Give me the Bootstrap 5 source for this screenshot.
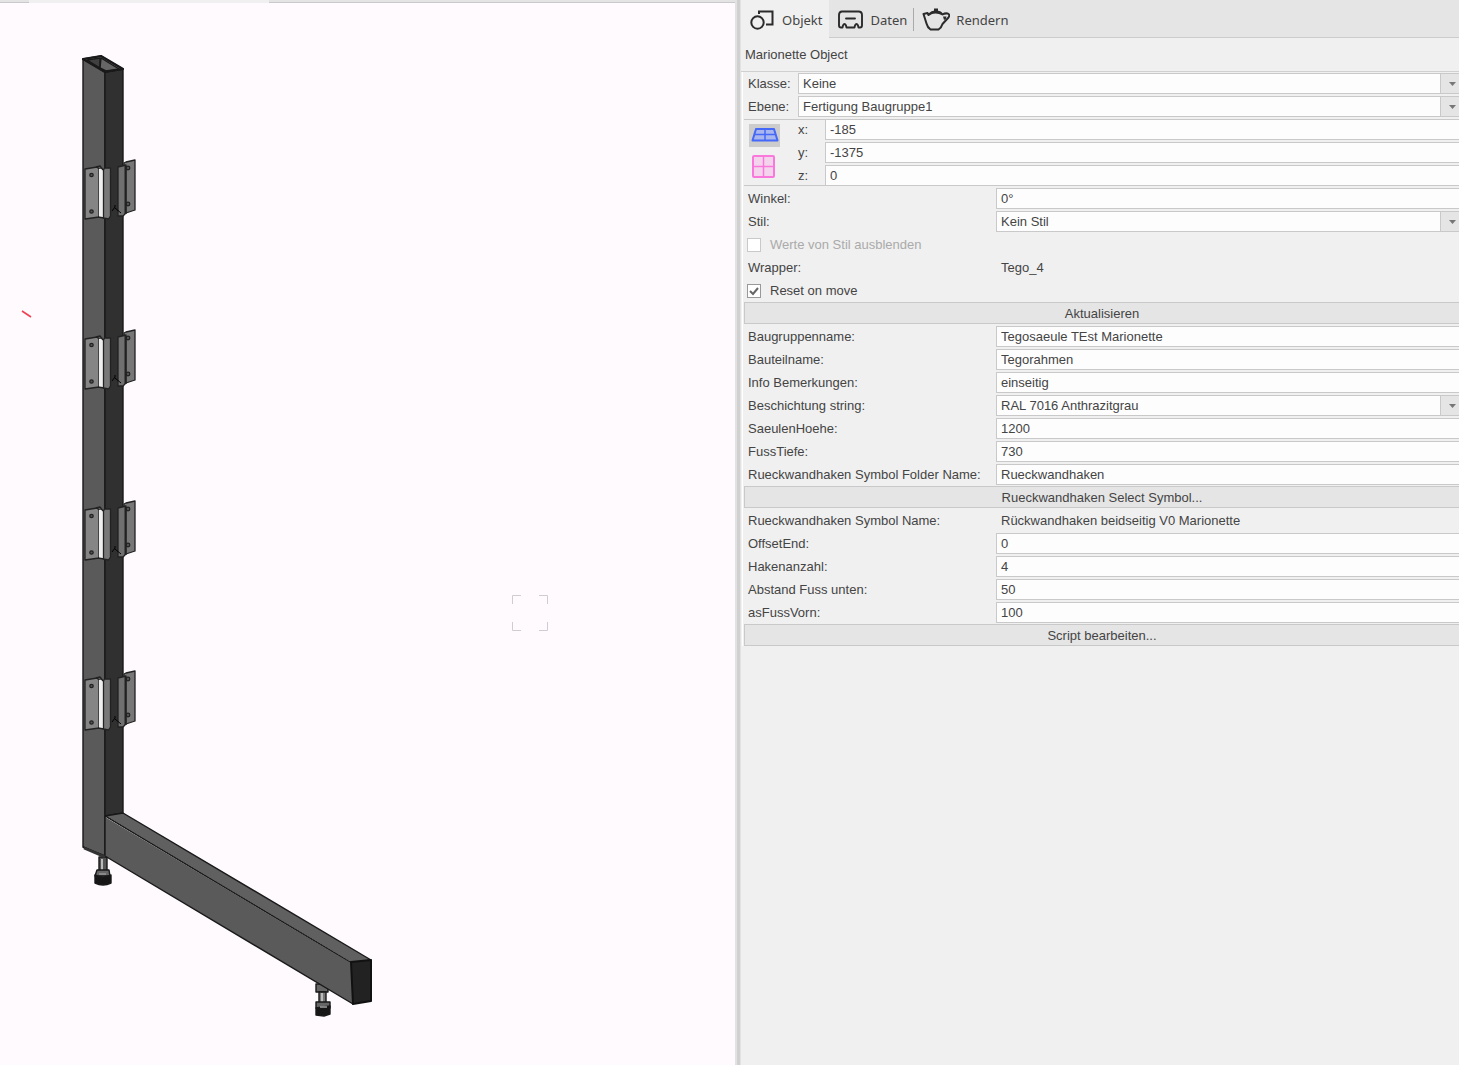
<!DOCTYPE html>
<html lang="de">
<head>
<meta charset="utf-8">
<meta name="viewport" content="width=device-width, initial-scale=1">
<title>Marionette Object</title>
<link rel="stylesheet" href="https://cdn.jsdelivr.net/npm/bootstrap@5.3.0/dist/css/bootstrap.min.css">
<style>
body{font:13px/20px "Liberation Sans",Arial,sans-serif;color:#444;background:#f0f0f0}
.view{background:#fefafe}
.strip{height:3px;background:#e4e4e4;border-bottom:1px solid #c9c9c9}
.strip span{width:240px;height:3px;margin-left:29px;background:#f0f0f0}
.split{width:6px;background:linear-gradient(to right,#e2e2e2 2px,#d0d0d0 2px,#d0d0d0 5px,#e2e2e2 5px)}
.dock{width:718px}
.tabs{height:38px;background:#e5e5e5;font-family:"Noto Sans","Open Sans",sans-serif;box-shadow:inset 0 -1px #ccc}
.tabs .nav-link{height:38px;padding:2px 7px 0 9px;gap:8px;color:#444;border:0}
.tabs .nav-link.active{background:#f0f0f0}
.tabs .nav-link+.nav-link,.tabs .rule+.nav-link{padding:2px 6px 0 8px;gap:6px}
.rule{width:1px;height:23px;background:#aaa}
.heading{height:34px;padding:7px 4px 0;font-size:13px;line-height:20px;border-bottom:1px solid #d0d0d0;margin:0;font-weight:400}
.props{border-left:1px solid #fff;margin-left:1px;padding-left:1px}
.line{height:23px;padding-left:4px}
.cap{width:248px;white-space:nowrap}
.cap-s{width:50px}
.line .form-control,.line .form-select{height:21px;min-height:0;padding:0 4px;font-size:13px;line-height:19px;color:#444;border:1px solid #c9c9c9;border-right:0;border-radius:0;background-color:#fdfdfd;flex:1;width:0}
.line .form-select{background-image:url("data:image/svg+xml,%3Csvg xmlns='http://www.w3.org/2000/svg' width='19' height='20'%3E%3Cpath fill='%23e5e5e5' d='M0 0h19v20H0z'/%3E%3Cpath fill='%23c9c9c9' d='M0 0h1v20H0z'/%3E%3Cpath fill='%23777' d='M9 8h7l-3.5 4z'/%3E%3C/svg%3E");background-position:right top;background-size:19px 20px}
.act{display:block;width:100%;height:22px;margin-bottom:1px;padding:1px 0 0;font-size:13px;line-height:19px;color:#444;background:#e5e5e5;border:1px solid #c9c9c9;border-right:0;border-radius:0}
.xyz{border-top:1px solid #c9c9c9;border-bottom:1px solid #c9c9c9;margin:1px 0;height:67px}
.xyz .line{padding-left:0}
.xyz .form-control{margin-top:-1px}
.axis{width:27px}
.modes{width:54px;padding:4px 0 0 5px}
.modes button{width:31px;height:23px;padding:0;border:0;border-radius:0;background:transparent;display:flex}
.modes button.active{background:#ccc;margin-bottom:8px}
.line .form-check-input{width:14px;height:14px;margin:1px 9px 0 -1px;border:1px solid #999;border-radius:0;background-color:#fff}
.line .form-check-input:checked{background-size:14px 14px;background-image:url("data:image/svg+xml,%3Csvg xmlns='http://www.w3.org/2000/svg' viewBox='0 0 14 14'%3E%3Cpath fill='none' stroke='%23666' stroke-width='2' d='M3 7l3 3 5-6'/%3E%3C/svg%3E")}
.line .form-check-input:disabled{opacity:1;border-color:#c9c9c9}
.line .form-check-input:disabled~label{opacity:1;color:#aaa}
.fixed-value{padding-left:5px}
</style>
<script src="https://cdn.jsdelivr.net/npm/bootstrap@5.3.0/dist/js/bootstrap.bundle.min.js"></script>
</head>
<body>
<div class="d-flex vh-100 overflow-hidden">
<main class="view flex-grow-1 d-flex flex-column overflow-hidden">
<div class="strip d-flex flex-shrink-0"><span></span></div>
<svg class="w-100 flex-grow-1" viewBox="0 3 735 1062" preserveAspectRatio="xMinYMin meet" role="img" aria-label="Tegorahmen 3D">
<defs>
<g id="hook" stroke="#222" stroke-width="1.3" stroke-linejoin="round">
<path fill="#777" d="M124 163l2-1 9-2v50l-9 3h-2z"/><circle cx="128" cy="168" r="1.8" fill="#555"/><circle cx="128" cy="204" r="1.8" fill="#555"/>
<path fill="#707070" d="M118 167l8-2v48l-3 3h-5z"/><path d="M125.500 166v48" stroke-width="2"/>
<path d="M112 211l3-4v-2m0 3l6 5" fill="none" stroke="#000" stroke-width="1"/>
<path fill="#858585" d="M85 169l12-2 2 2v48l-14 2z"/><circle cx="91.500" cy="175" r="1.700" fill="#555"/><circle cx="91.500" cy="211.500" r="1.700" fill="#555"/>
<path fill="#eee" stroke="none" d="M99 169h4v48h-4z"/><path fill="none" d="M96 167l4-1 3 4M98 217l6 1"/>
<path fill="#777" d="M103.500 170l1-2h6v48l-2 3-5-1z"/>
</g>
</defs>
<g stroke="#191919" stroke-width="1.400" stroke-linejoin="round">
<path fill="#555" d="M99 857h8v14h-8z"/><path stroke="#bbb" stroke-width="2" d="M102 859v11"/>
<path fill="#666" d="M97 870h12l1 6H95z"/><path fill="#161616" d="M95 875q8 4 16 0v8q-8 4-16 0z"/><path stroke="#999" d="M99 874h7"/>
<path fill="#666" d="M316 984h12v8h-12z"/><path fill="#777" d="M319 992h7v12h-7z"/><path stroke="#bbb" stroke-width="2" d="M322 993v9"/>
<path fill="#666" d="M316 1002h14v6h-14z"/><path fill="#161616" d="M316 1008l14-2v8l-6 2-8-1z"/><path stroke="#aaa" d="M320 1007h7"/>
<path fill="#5a5a5a" d="M83 59l22 13v785l-22-10z"/>
<path fill="#303030" d="M105 72l18-3v744l-18 3z"/>
<path fill="#777" d="M83 59l18-3 22 13-18 3z"/><path fill="#404040" d="M87 60l13-2v10z"/><path fill="#666" d="M101 58l18 11-13 2-6-3z"/>
<path fill="none" stroke-width="2.200" d="M83 59l18-3 22 13-18 3z"/>
<path fill="#606060" d="M105 816l18-3 248 147-20 3z"/>
<path fill="#5a5a5a" stroke="none" d="M105 817l246 146 2 41-248-148z"/>
<path fill="none" stroke-width="1" stroke-dasharray="2 1" d="M107 817l245 146"/>
<path fill="none" d="M83 847l22 9 248 148M105 816v41"/>
<path fill="none" stroke-width="2.500" stroke="#333" d="M84 848l21 9"/>
<path fill="#222" stroke="#111" stroke-width="2" d="M351 962l20-2v41l-18 3z"/>
</g>
<use href="#hook"/><use href="#hook" y="170"/><use href="#hook" y="341"/><use href="#hook" y="511"/>
<path stroke="#f04050" stroke-width="1.600" d="M22 311l9 6"/>
<path fill="none" stroke="#d0ccd2" d="M512.500 604v-8.500h8.500M539 595.500h8.500v8.500M547.500 622v8.500h-8.500M521 630.500h-8.500v-8.500"/>
</svg>
</main>
<div class="split flex-shrink-0"></div>
<aside class="dock flex-shrink-0">
<nav class="tabs nav align-items-center flex-nowrap">
<a href="#" class="nav-link active d-flex align-items-center"><svg width="24" height="24" viewBox="750 8 24 24" fill="none" stroke="#2b2b2b" stroke-width="2"><circle cx="757.500" cy="22.500" r="6.200"/><path d="M759 14v-2.500h13.500v13H766"/></svg>Objekt</a>
<a href="#" class="nav-link d-flex align-items-center"><svg width="27" height="24" viewBox="839 8 27 24" fill="none" stroke="#2b2b2b" stroke-width="1.900" stroke-linejoin="round" stroke-linecap="round"><path d="M844 11.500h16.500q3.500 0 3.500 3.500v10.500q0 2-2 2h-1.500l-.5-2q-1.500-3-3 0l-.5 2h-8l-.5-2q-1.500-3-3 0l-.5 2H843q-2 0-2-2V15q0-3.500 3-3.500zM848 18.500h9"/></svg>Daten</a>
<span class="rule"></span>
<a href="#" class="nav-link d-flex align-items-center"><svg width="28" height="24" viewBox="924 8 28 24" fill="none" stroke="#2b2b2b" stroke-width="2" stroke-linejoin="round"><path d="M925.500 14l4-1 1 2q3-2.500 7-2.500t7 2q2.500-1.500 5-1 3 1 1 4l-6 6.500q-1 3.500-4 5.500h-8q-3-2-4-6zM931 14.500q2.500-3 7-3t6 2.500"/><path fill="#2b2b2b" stroke="none" d="M936 8.500h4v3h-4zM945 16.500h3.500q0 2.500-2.500 3.500z"/></svg>Rendern</a>
</nav>
<h1 class="heading">Marionette Object</h1>
<form class="props">
<div class="line d-flex align-items-center"><label class="cap-s" for="kl">Klasse:</label><select id="kl" class="form-select"><option>Keine</option></select></div>
<div class="line d-flex align-items-center"><label class="cap-s" for="eb">Ebene:</label><select id="eb" class="form-select"><option>Fertigung Baugruppe1</option></select></div>
<div class="xyz d-flex">
<div class="modes">
<button type="button" class="active" aria-label="Arbeitsebene"><svg width="31" height="23" viewBox="0 0 31 23" fill="#a9b7ee" stroke="#4468f8" stroke-width="2" stroke-linejoin="round"><path d="M7 5h18l3.500 11.500H3.500z"/><path stroke-width="1.500" d="M5 10.500h22M16 5v11.500"/></svg></button>
<button type="button" aria-label="Konstruktionsebene"><svg width="31" height="23" viewBox="0 0 31 23" fill="#f3d4ec" stroke="#fa78dc" stroke-width="2"><rect x="4" y="1" width="21" height="21" rx="1"/><path stroke-width="1.500" d="M4 11.500h21M14.500 1v21"/></svg></button>
</div>
<div class="flex-grow-1">
<div class="line d-flex align-items-start"><label class="axis" for="px">x:</label><input id="px" class="form-control" value="-185"></div>
<div class="line d-flex align-items-start"><label class="axis" for="py">y:</label><input id="py" class="form-control" value="-1375"></div>
<div class="line d-flex align-items-start"><label class="axis" for="pz">z:</label><input id="pz" class="form-control" value="0"></div>
</div></div>
<div class="line d-flex align-items-center"><label class="cap" for="wi">Winkel:</label><input id="wi" class="form-control" value="0°"></div>
<div class="line d-flex align-items-center"><label class="cap" for="st">Stil:</label><select id="st" class="form-select"><option>Kein Stil</option></select></div>
<div class="line d-flex align-items-center"><input id="ws" type="checkbox" class="form-check-input" disabled><label for="ws">Werte von Stil ausblenden</label></div>
<div class="line d-flex align-items-center"><span class="cap">Wrapper:</span><span class="fixed-value">Tego_4</span></div>
<div class="line d-flex align-items-center"><input id="rm" type="checkbox" class="form-check-input" checked><label for="rm">Reset on move</label></div>
<button type="button" class="act">Aktualisieren</button>
<div class="line d-flex align-items-center"><label class="cap" for="bg">Baugruppenname:</label><input id="bg" class="form-control" value="Tegosaeule TEst Marionette"></div>
<div class="line d-flex align-items-center"><label class="cap" for="bt">Bauteilname:</label><input id="bt" class="form-control" value="Tegorahmen"></div>
<div class="line d-flex align-items-center"><label class="cap" for="ib">Info Bemerkungen:</label><input id="ib" class="form-control" value="einseitig"></div>
<div class="line d-flex align-items-center"><label class="cap" for="bs">Beschichtung string:</label><select id="bs" class="form-select"><option>RAL 7016 Anthrazitgrau</option></select></div>
<div class="line d-flex align-items-center"><label class="cap" for="sh">SaeulenHoehe:</label><input id="sh" class="form-control" value="1200"></div>
<div class="line d-flex align-items-center"><label class="cap" for="ft">FussTiefe:</label><input id="ft" class="form-control" value="730"></div>
<div class="line d-flex align-items-center"><label class="cap" for="rf">Rueckwandhaken Symbol Folder Name:</label><input id="rf" class="form-control" value="Rueckwandhaken"></div>
<button type="button" class="act">Rueckwandhaken Select Symbol...</button>
<div class="line d-flex align-items-center"><span class="cap">Rueckwandhaken Symbol Name:</span><span class="fixed-value">Rückwandhaken beidseitig V0 Marionette</span></div>
<div class="line d-flex align-items-center"><label class="cap" for="oe">OffsetEnd:</label><input id="oe" class="form-control" value="0"></div>
<div class="line d-flex align-items-center"><label class="cap" for="ha">Hakenanzahl:</label><input id="ha" class="form-control" value="4"></div>
<div class="line d-flex align-items-center"><label class="cap" for="af">Abstand Fuss unten:</label><input id="af" class="form-control" value="50"></div>
<div class="line d-flex align-items-center"><label class="cap" for="fv">asFussVorn:</label><input id="fv" class="form-control" value="100"></div>
<button type="button" class="act">Script bearbeiten...</button>
</form>
</aside>
</div>
</body>
</html>
